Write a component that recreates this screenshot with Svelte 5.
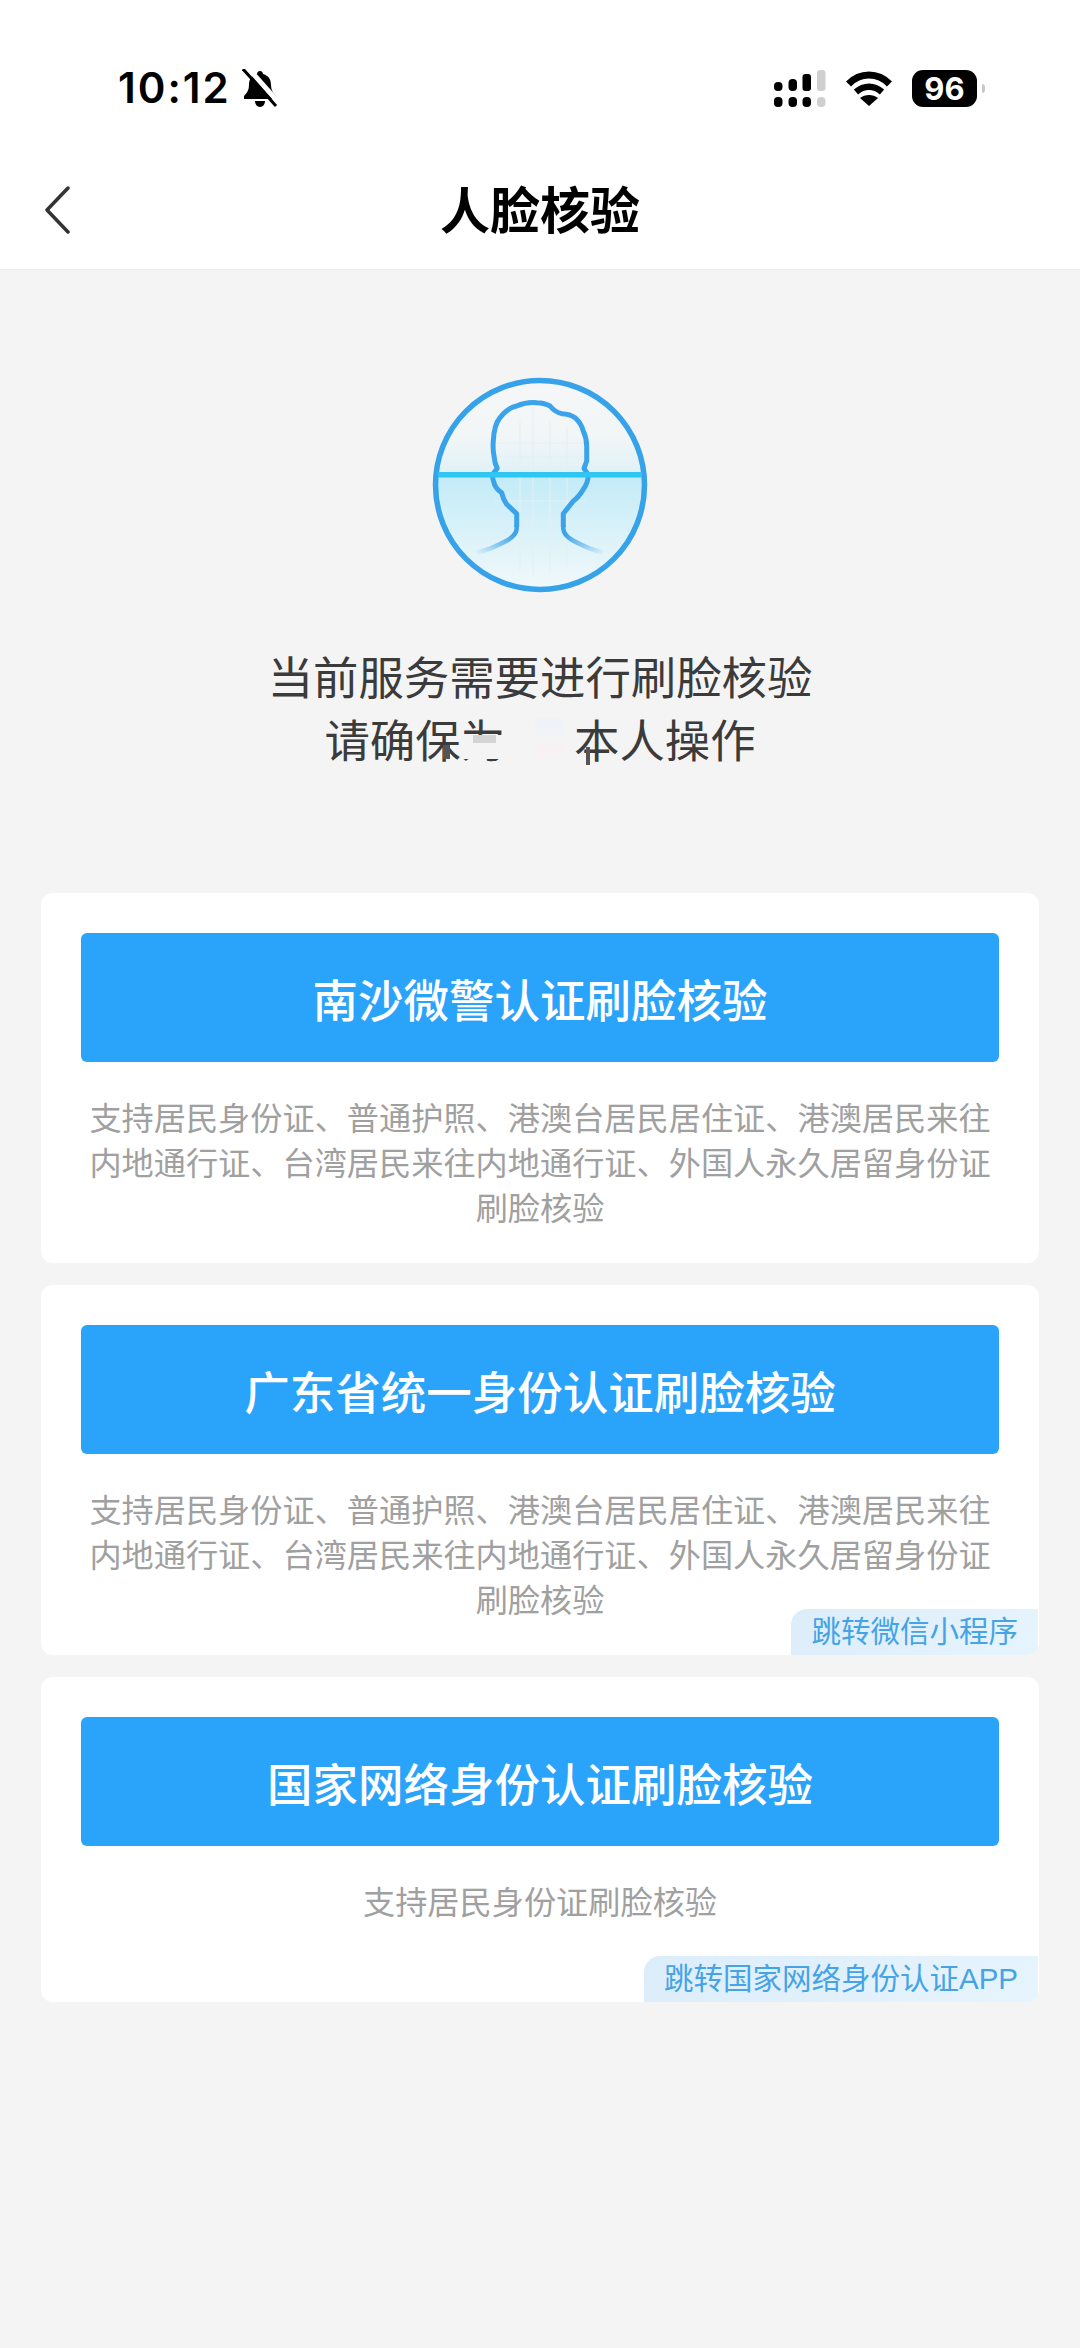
<script>
  const desc = '支持居民身份证、普通护照、港澳台居民居住证、港澳居民来往内地通行证、台湾居民来往内地通行证、外国人永久居留身份证刷脸核验'

  const methods = [
    { title: '南沙微警认证刷脸核验', desc, tag: '' },
    { title: '广东省统一身份认证刷脸核验', desc, tag: '跳转微信小程序' },
    { title: '国家网络身份认证刷脸核验', desc: '支持居民身份证刷脸核验', tag: '跳转国家网络身份认证APP' }
  ]
</script>

<div class="page">
  <header class="top">
    <div class="status">
      <div class="left">
        <span class="time">10:12</span>
        <svg class="bell" viewBox="0 0 36 38" width="36" height="38">
          <path d="M18 2c2 0 3 1.500 3 3 6 1.500 8 6 8 11 0 5 2 8 5 11l1 3H2v-3c3-3 5-6 5-11 0-5 2-9.500 8-11 0-1.500 1-3 3-3z" fill="#000"/>
          <path d="M13 32h10c0 3-2 6-5 6s-5-3-5-6z" fill="#000"/>
          <path d="M6-1l31 35" stroke="#fff" stroke-width="5"/>
          <path d="M1 0l33 37" stroke="#000" stroke-width="3"/>
        </svg>
      </div>
      <div class="right">
        <svg viewBox="0 0 52 37" width="52" height="37">
          <g fill="#000">
            <rect x="0" y="12" width="8.500" height="9" rx="4"/>
            <rect x="0" y="27" width="8.500" height="10" rx="4"/>
            <rect x="14.500" y="9" width="8.500" height="12" rx="4"/>
            <rect x="14.500" y="27" width="8.500" height="10" rx="4"/>
            <rect x="28.500" y="4" width="8.500" height="17" rx="3"/>
            <rect x="28.500" y="27" width="8.500" height="10" rx="4"/>
          </g>
          <g fill="#cfcfcf">
            <rect x="43" y="0" width="8.500" height="21" rx="3"/>
            <rect x="43" y="27" width="8.500" height="10" rx="4"/>
          </g>
        </svg>
        <svg viewBox="0 0 46 35" width="46" height="35">
          <path d="M2.500 13C14 1 32 1 43.500 13" fill="none" stroke="#000" stroke-width="7"/>
          <path d="M10 21c8-7 18-7 26 0" fill="none" stroke="#000" stroke-width="6.500"/>
          <path d="M14 27c5-4 13-4 18 0l-9 8z" fill="#000"/>
        </svg>
        <div class="battery"><span>96</span><i></i></div>
      </div>
    </div>
    <nav class="bar">
      <svg class="back" viewBox="0 0 26 48" width="26" height="48">
        <path d="M24 2L3 24l21 22" fill="none" stroke="#333" stroke-width="3.500" stroke-linecap="round" stroke-linejoin="round"/>
      </svg>
      <h1>人脸核验</h1>
    </nav>
  </header>

  <main>
    <svg class="face" viewBox="0 0 216 216" width="216" height="216">
      <defs>
        <linearGradient id="upper" x1="0" y1="0" x2="0" y2="1">
          <stop offset="0" stop-color="#f5f6f7"/>
          <stop offset="0.6" stop-color="#f2f6f7"/>
          <stop offset="1" stop-color="#dff1f6"/>
        </linearGradient>
        <linearGradient id="lower" x1="0" y1="0" x2="0" y2="1">
          <stop offset="0" stop-color="#c2ebf7"/>
          <stop offset="1" stop-color="#f3f9fb"/>
        </linearGradient>
        <linearGradient id="fadeL" x1="1" y1="0" x2="0" y2="1">
          <stop offset="0.2" stop-color="#3aa3ea"/>
          <stop offset="1" stop-color="#3aa3ea" stop-opacity="0.05"/>
        </linearGradient>
        <linearGradient id="fadeR" x1="0" y1="0" x2="1" y2="1">
          <stop offset="0.2" stop-color="#3aa3ea"/>
          <stop offset="1" stop-color="#3aa3ea" stop-opacity="0.05"/>
        </linearGradient>
        <clipPath id="disc"><circle cx="108" cy="108" r="104"/></clipPath>
      </defs>
      <g clip-path="url(#disc)">
        <rect x="0" y="0" width="216" height="98" fill="url(#upper)"/>
        <rect x="0" y="98" width="216" height="118" fill="url(#lower)"/>
        <path d="M88 44v150M101 30v170M118 44v150M135 50v140M62 66h92M62 80h92M62 124h92M62 146h92M62 168h92" stroke="#e4eff4" stroke-width="1"/>
      </g>
      <circle cx="108" cy="108" r="104.500" fill="none" stroke="#36a2ea" stroke-width="5.500"/>
      <path d="M84.700 150V136.700L74.700 127.300Q71 122 69.700 115.700Q63 111 62 105.700Q60 100 60.700 97.300L65.300 91.300Q62.500 86 62.300 80.700Q60.500 72 61.300 64Q62 48 68 40.700Q75 31 84.700 29Q95 24.500 104.700 25.700Q113 26 118 29Q123 35 129.700 36.700Q138 37 143 40.700Q149 46 151.300 54Q155 62 154.700 70.700V84L152 91.300L156.300 98Q156 106 151.300 112.300Q147 120 141.300 124L131.300 136.700V150" fill="none" stroke="#3aa3ea" stroke-width="5" stroke-linejoin="round"/>
      <path d="M84.700 148V152Q84 158 76 163Q60 172 44.700 175.700" fill="none" stroke="url(#fadeL)" stroke-width="4.500"/>
      <path d="M131.300 148V152Q132 158 140 163Q156 172 171.300 175.700" fill="none" stroke="url(#fadeR)" stroke-width="4.500"/>
      <rect x="6" y="95" width="204" height="5.500" fill="#2fc6f4"/>
    </svg>

    <div class="intro">
      <p>当前服务需要进行刷脸核验</p>
      <p class="second">
        <span>请确保为</span><span class="name"></span><span>本人操作</span>
        <i class="mask"></i><i class="block"></i><i class="tick"></i><i class="tick two"></i>
      </p>
    </div>

    <div class="cards">
      {#each methods as m}
        <section class="card">
          <button>{m.title}</button>
          <p class="desc">{m.desc}</p>
          {#if m.tag}
            <span class="tag">{m.tag}</span>
          {/if}
        </section>
      {/each}
    </div>
  </main>
</div>

<style>
  :global(body) {
    margin: 0;
    background: #f4f4f4;
  }
  .page {
    min-height: 2348px;
    background: #f4f4f4;
    font-family: "Liberation Sans", "Noto Sans CJK SC", sans-serif;
  }
  .top {
    background: #fff;
    border-bottom: 1px solid #ececec;
    height: 270px;
    box-sizing: border-box;
  }
  .status {
    display: flex;
    justify-content: space-between;
    align-items: center;
    height: 38px;
    padding: 69px 103px 0 118px;
  }
  .left, .right {
    display: flex;
    align-items: center;
  }
  .left { gap: 11px; }
  .right { gap: 20px; }
  .time {
    font-family: Inter, sans-serif;
    font-size: 42px;
    font-weight: 600;
    letter-spacing: 2px;
    line-height: 38px;
    color: #000;
  }
  .battery {
    position: relative;
    width: 65px;
    height: 37px;
    background: #000;
    border-radius: 11px;
    color: #fff;
    font-family: Inter, sans-serif;
    font-size: 31px;
    font-weight: 700;
    line-height: 37px;
    text-align: center;
  }
  .battery i {
    position: absolute;
    right: -8px;
    top: 14px;
    width: 3px;
    height: 9px;
    background: #c8c8c8;
    border-radius: 0 4px 4px 0;
  }
  .bar {
    position: relative;
    height: 162px;
    box-sizing: border-box;
    padding-top: 38px;
    display: flex;
    align-items: center;
    justify-content: center;
  }
  .back {
    position: absolute;
    left: 44px;
    top: 79px;
  }
  h1 {
    margin: 0;
    font-size: 50px;
    font-weight: 700;
    color: #000;
  }
  main {
    display: flex;
    flex-direction: column;
    align-items: center;
    padding-top: 107px;
  }
  .face { display: block; }
  .intro {
    margin-top: 55px;
    text-align: center;
    font-size: 45.400px;
    line-height: 63px;
    color: #3b3b3b;
  }
  .intro p { margin: 0; }
  .second {
    position: relative;
    display: flex;
    justify-content: center;
  }
  .name {
    width: 68px;
    position: relative;
  }
  .name::after {
    content: "";
    position: absolute;
    left: 29px;
    top: 8px;
    width: 28px;
    height: 44px;
    background: linear-gradient(#eef2fb, #f4f4f4 50%, #f9f0f3 60%, #f4f4f4);
  }
  .mask {
    position: absolute;
    left: 195px;
    top: 24px;
    width: 46px;
    height: 24px;
    background: #f4f4f4;
  }
  .block {
    position: absolute;
    left: 205px;
    top: 24px;
    width: 23px;
    height: 8px;
    background: #d4d4d4;
  }
  .tick {
    position: absolute;
    left: 175px;
    top: 34px;
    width: 7px;
    height: 14px;
    background: #555;
  }
  .tick.two {
    left: 318px;
    top: 36px;
    width: 4px;
    height: 18px;
  }
  .cards {
    margin-top: 119px;
    align-self: stretch;
    padding: 0 41px;
    display: flex;
    flex-direction: column;
    gap: 22px;
  }
  .card {
    position: relative;
    background: #fff;
    border-radius: 12px;
    padding: 40px 40px 31px;
    overflow: hidden;
  }
  .card:last-child { padding-bottom: 76px; }
  button {
    display: block;
    width: 100%;
    height: 129px;
    border: none;
    border-radius: 6px;
    background: #2aa3fa;
    color: #fff;
    font-family: inherit;
    font-size: 45.500px;
    font-weight: 500;
  }
  .desc {
    margin: 35px 0 0;
    font-size: 32.200px;
    line-height: 45px;
    color: #a0a0a0;
    text-align: center;
  }
  .tag {
    position: absolute;
    right: 1px;
    bottom: 0;
    height: 46px;
    line-height: 46px;
    padding: 0 20px;
    font-size: 29.500px;
    color: #45a3e6;
    background: linear-gradient(135deg, #dcedfa, #e6f4fd);
    border-radius: 16px 0 0 0;
  }
</style>
